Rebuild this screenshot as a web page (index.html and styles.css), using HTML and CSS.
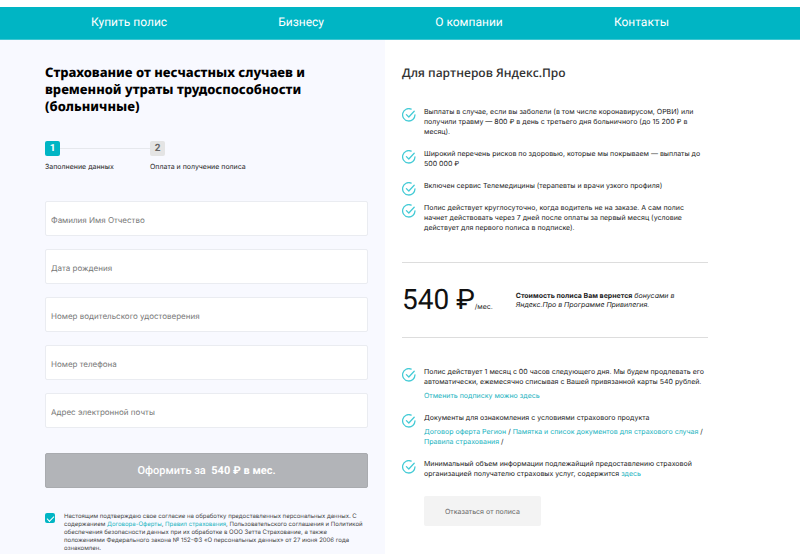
FILE: index.html
```html
<!DOCTYPE html>
<html lang="ru">
<head>
    <meta charset="UTF-8">
    <meta name="viewport" content="width=device-width, initial-scale=1.0">
    <title>Страхование для партнеров Яндекс.Про</title>
    <link rel="stylesheet" href="styles.css">
</head>
<body>
    <svg class="sprite" aria-hidden="true">
        <symbol id="check" viewBox="0 0 14 14">
            <path d="M9.2 1.1A6.2 6.2 0 1 0 13 6.8" />
            <path d="M4.4 6.6l2.4 2.4L12.2 3.2" />
        </symbol>
    </svg>

    <header class="header">
        <nav class="nav">
            <a href="#">Купить полис</a>
            <a href="#">Бизнесу</a>
            <a href="#">О компании</a>
            <a href="#">Контакты</a>
        </nav>
    </header>

    <main class="page">
        <section class="order">
            <h1>Страхование от несчастных случаев и временной утраты трудоспособности (больничные)</h1>

            <ol class="steps">
                <li class="step active">
                    <span class="step-number">1</span>
                    <span class="step-label">Заполнение данных</span>
                </li>
                <li class="step">
                    <span class="step-number">2</span>
                    <span class="step-label">Оплата и получение полиса</span>
                </li>
            </ol>

            <form class="order-form">
                <input type="text" name="name" placeholder="Фамилия Имя Отчество" aria-label="Фамилия Имя Отчество">
                <input type="text" name="birthday" placeholder="Дата рождения" aria-label="Дата рождения">
                <input type="text" name="license" placeholder="Номер водительского удостоверения" aria-label="Номер водительского удостоверения">
                <input type="tel" name="phone" placeholder="Номер телефона" aria-label="Номер телефона">
                <input type="email" name="email" placeholder="Адрес электронной почты" aria-label="Адрес электронной почты">
                <button type="submit" class="submit-btn">Оформить за&nbsp; <b>540 ₽ в мес.</b></button>
                <div class="agree">
                    <input type="checkbox" id="agree" name="agree" checked>
                    <label for="agree">Настоящим подтверждаю свое согласие на обработку предоставленных персональных данных. С содержанием <a href="#">Договора-Оферты</a>, <a href="#">Правил страхования</a>, Пользовательского соглашения и Политикой обеспечения безопасности данных при их обработке в ООО Зетта Страхование, а также<br> положениями Федерального закона № 152-ФЗ «О персональных данных» от 27 июня 2006 года<br> ознакомлен.</label>
                </div>
            </form>
        </section>

        <section class="info">
            <h2>Для партнеров Яндекс.Про</h2>

            <ul class="list">
                <li>
                    <svg class="icon"><use href="#check" /></svg>
                    <p>Выплаты в случае, если вы заболели (в том числе коронавирусом, ОРВИ) или получили травму — 800 ₽ в день с третьего дня больничного (до 15 200 ₽ в<br> месяц).</p>
                </li>
                <li>
                    <svg class="icon"><use href="#check" /></svg>
                    <p>Широкий перечень рисков по здоровью, которые мы покрываем — выплаты до 500 000 ₽</p>
                </li>
                <li>
                    <svg class="icon"><use href="#check" /></svg>
                    <p>Включен сервис Телемедицины (терапевты и врачи узкого профиля)</p>
                </li>
                <li>
                    <svg class="icon"><use href="#check" /></svg>
                    <p>Полис действует круглосуточно, когда водитель не на заказе. А сам полис<br> начнет действовать через 7 дней после оплаты за первый месяц (условие<br> действует для первого полиса в подписке).</p>
                </li>
            </ul>

            <div class="price">
                <div class="price-value"><span class="sum">540 ₽</span>/мес.</div>
                <p class="price-note"><b>Стоимость полиса Вам вернется</b> <i>бонусами в Яндекс.Про в Программе Привилегия.</i></p>
            </div>

            <ul class="list">
                <li>
                    <svg class="icon"><use href="#check" /></svg>
                    <div>
                        <p>Полис действует 1 месяц с 00 часов следующего дня. Мы будем продлевать его автоматически, ежемесячно списывая с Вашей привязанной карты 540 рублей.</p>
                        <p><a href="#">Отменить подписку можно здесь</a></p>
                    </div>
                </li>
                <li>
                    <svg class="icon"><use href="#check" /></svg>
                    <div>
                        <p>Документы для ознакомления с условиями страхового продукта</p>
                        <p><a href="#">Договор оферта Регион</a> / <a href="#">Памятка и список документов для страхового случая</a> / <a href="#">Правила страхования</a> /</p>
                    </div>
                </li>
                <li>
                    <svg class="icon"><use href="#check" /></svg>
                    <p>Минимальный объем информации подлежайщий предоставлению страховой организацией получателю страховых услуг, содержится <a href="#">здесь</a></p>
                </li>
            </ul>

            <button type="button" class="cancel-btn">Отказаться от полиса</button>
        </section>
    </main>
</body>
</html>
```

FILE: styles.css
```css
* {
    box-sizing: border-box;
}
body {
    margin: 0;
    padding-top: 7px;
    background-color: #fff;
    color: #222;
    font-family: Inter, sans-serif;
    font-size: 7px;
    line-height: 10px;
    text-rendering: geometricPrecision;
}
h1, h2, p, ul, ol {
    margin: 0;
    padding: 0;
}
ul, ol {
    list-style: none;
}
a {
    color: #1ab3c0;
    text-decoration: none;
}
input, button {
    font-family: inherit;
    text-rendering: inherit;
}
.sprite {
    display: none;
}
.header {
    background-color: #00b5c4;
    border-bottom: 1px solid #3fc6d1;
}
.nav {
    display: flex;
    justify-content: space-between;
    padding: 5px 131px 7px 91px;
}
.nav a {
    color: #fff;
    font-family: Roboto, Arial, sans-serif;
    font-size: 12px;
    line-height: 20px;
}

.page {
    display: grid;
    grid-template-columns: 77fr 83fr;
}
.order {
    padding: 24px 17px 0 45px;
    background-color: #f8f9ff;
}
h1 {
    color: #000;
    font-family: "Noto Sans", sans-serif;
    font-size: 13px;
    font-weight: 800;
    line-height: 17px;
}
.steps {
    display: flex;
    margin-top: 26px;
}
.step {
    display: flex;
    flex-direction: column;
    gap: 6px;
}
.step.active {
    width: 105px;
    background: linear-gradient(#e6e8ed, #e6e8ed) 0 7px / 100% 1px no-repeat;
}
.step-number {
    width: 15px;
    height: 15px;
    border-radius: 2px;
    background-color: #e4e4e4;
    color: #666;
    font-family: Roboto, Arial, sans-serif;
    font-size: 10px;
    font-weight: bold;
    line-height: 15px;
    text-align: center;
}
.active .step-number {
    background-color: #00b5c4;
    color: #fff;
}
.order-form {
    display: flex;
    flex-direction: column;
    gap: 13px;
    margin-top: 29px;
}
input[type="text"], input[type="tel"], input[type="email"] {
    width: 100%;
    height: 35px;
    padding: 2px 5px 0;
    border: 1px solid #eaecf1;
    border-radius: 2px;
    background-color: #fff;
    color: #222;
    font-size: 8px;
}
::placeholder {
    color: #777;
}
.submit-btn {
    height: 35px;
    margin-top: 12px;
    border: 1px solid #a9abaf;
    border-radius: 2px;
    background-color: #b2b4b8;
    color: #fff;
    font-family: Roboto, Arial, sans-serif;
    font-size: 11px;
    font-weight: 500;
    cursor: pointer;
}
.agree {
    display: flex;
    gap: 9px;
    margin-top: 12px;
    color: #444;
    font-size: 6px;
    line-height: 8px;
}
.agree input {
    appearance: none;
    flex: none;
    width: 10px;
    height: 10px;
    margin: 0;
    border-radius: 2px;
    background-color: #00b5c4;
}
.agree input:checked::after {
    content: "";
    display: block;
    width: 6px;
    height: 3px;
    margin: 3px 2px;
    border-left: 1px solid #fff;
    border-bottom: 1px solid #fff;
    transform: rotate(-45deg);
}

.info {
    padding: 24px 92px 28px 17px;
}
h2 {
    color: #333;
    font-family: "Open Sans", sans-serif;
    font-size: 12px;
    font-weight: 600;
    line-height: 17px;
    margin-bottom: 26px;
}
.list {
    display: flex;
    flex-direction: column;
    gap: 12px;
}
.list li {
    display: flex;
    gap: 8px;
}
.list p + p {
    margin-top: 4px;
}
.icon {
    flex: none;
    width: 14px;
    height: 14px;
    margin: 1px 0 -5px;
    fill: none;
    stroke: #45cbd6;
    stroke-width: 1.3;
    stroke-linecap: round;
    stroke-linejoin: round;
}
.price {
    display: flex;
    align-items: center;
    gap: 23px;
    margin: 29px 0;
    padding: 20px 0;
    border-top: 1px solid #ddd;
    border-bottom: 1px solid #ddd;
}
.price-value {
    white-space: nowrap;
}
.sum {
    color: #111;
    font-family: Roboto, Arial, sans-serif;
    font-size: 28px;
    line-height: 34px;
}
.price-note {
    max-width: 170px;
    line-height: 9px;
}
.cancel-btn {
    height: 30px;
    margin: 17px 0 0 22px;
    padding: 0 21px;
    border: none;
    border-radius: 2px;
    background-color: #f3f3f3;
    color: #666;
    font-size: 7px;
    cursor: pointer;
}
```
